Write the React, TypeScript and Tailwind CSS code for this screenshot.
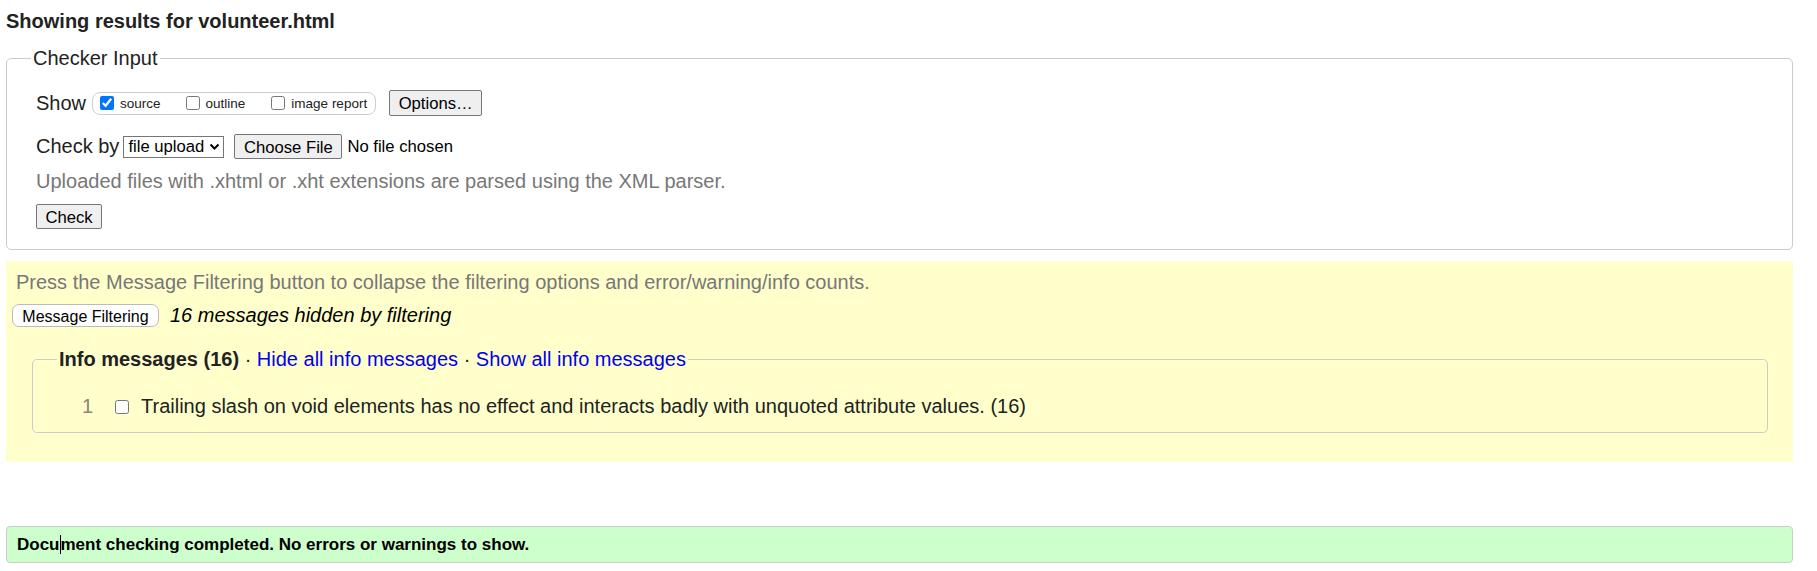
export default function App() {
  return (
    <div className="min-h-[571px] bg-white pl-[6px] pr-[24px] pt-[10px] font-['Liberation_Sans',Arial,sans-serif] text-[#222]">
      <h2 className="text-[20px] font-bold leading-[23px]">Showing results for volunteer.html</h2>

      {/* checker input */}
      <fieldset className="mt-[14px] rounded-[5px] border border-[#ccc] pb-[19px] pl-[24px]">
        <legend className="px-[2px] text-[20px] leading-[23px]">Checker Input</legend>

        <div className="mt-[20px] flex h-[26px] items-center pl-[5px]">
          <span className="text-[20px] leading-[23px]">Show</span>
          <div className="ml-[6px] flex h-[23px] items-center rounded-[8px] border border-[#ccc] pl-[7px] pr-[8px] text-[13.5px]">
            <label className="mr-[25px] flex items-center gap-[6px]">
              <input type="checkbox" defaultChecked className="h-[14px] w-[14px] accent-[#0075ff]" />
              <span className="pt-[3px]">source</span>
            </label>
            <label className="mr-[26px] flex items-center gap-[6px]">
              <input type="checkbox" className="h-[14px] w-[14px]" />
              <span className="pt-[3px]">outline</span>
            </label>
            <label className="flex items-center gap-[6px]">
              <input type="checkbox" className="h-[14px] w-[14px]" />
              <span className="pt-[3px]">image report</span>
            </label>
          </div>
          <button className="ml-[13px] h-[26px] w-[93px] rounded-[2px] border border-[#767676] bg-[#efefef] text-[16.67px] text-black">
            Options…
          </button>
        </div>

        <div className="mt-[18px] flex h-[25px] items-center pl-[5px]">
          <span className="text-[20px] leading-[23px]">Check by</span>
          <div className="ml-[4px] flex h-[22px] w-[101px] items-center justify-between border border-[#767676] bg-white pl-[4px] pr-[3px] text-[16.67px] text-black">
            file upload
            <svg width="11" height="8" viewBox="0 0 11 8">
              <path d="M1.5 1.5 L5.5 5.5 L9.5 1.5" fill="none" stroke="#000" strokeWidth="2" />
            </svg>
          </div>
          <button className="ml-[10px] h-[25px] w-[108px] rounded-[2px] border border-[#767676] bg-[#efefef] text-[16.67px] text-black">
            Choose File
          </button>
          <span className="ml-[5px] text-[16.67px] text-black">No file chosen</span>
        </div>

        <p className="mt-[11px] pl-[5px] text-[20px] leading-[23px] text-[#777]">
          Uploaded files with .xhtml or .xht extensions are parsed using the XML parser.
        </p>

        <div className="mt-[11px] pl-[5px]">
          <button className="h-[25px] w-[66px] rounded-[2px] border border-[#767676] bg-[#efefef] text-[16.67px] text-black">
            Check
          </button>
        </div>
      </fieldset>

      {/* message filtering */}
      <div className="mt-[11px] bg-[#ffffcc] pb-[29px] pt-[10px]">
        <p className="pl-[10px] text-[20px] leading-[23px] text-[#777]">
          Press the Message Filtering button to collapse the filtering options and error/warning/info counts.
        </p>
        <div className="mt-[10px] flex items-center pl-[6px]">
          <button className="h-[23px] w-[147px] rounded-[7px] border border-[#bbb] bg-white text-[16px] text-black">
            Message Filtering
          </button>
          <span className="ml-[11px] text-[20px] italic leading-[23px] text-black">16 messages hidden by filtering</span>
        </div>

        <fieldset className="ml-[26px] mr-[25px] mt-[21px] rounded-[5px] border border-[#ccc] pb-[14px] pl-[24px]">
          <legend className="px-[2px] text-[20px] leading-[23px]">
            <b>Info messages (16)</b> · <span className="text-[#0000ee]">Hide all info messages</span> ·{' '}
            <span className="text-[#0000ee]">Show all info messages</span>
          </legend>
          <div className="mt-[24px] flex items-center text-[20px] leading-[23px]">
            <span className="w-[58px] pr-[22px] text-right text-[#8a8574]">1</span>
            <input type="checkbox" className="h-[14px] w-[14px]" />
            <span className="ml-[12px]">
              Trailing slash on void elements has no effect and interacts badly with unquoted attribute values. (16)
            </span>
          </div>
        </fieldset>
      </div>

      {/* result */}
      <div className="mt-[64px] flex h-[37px] items-center rounded-[4px] border border-[#ccc] bg-[#ccffcc] pl-[10px] text-[17px] font-bold text-black">
        Docu
        <span className="inline-block h-[19px] w-px bg-black" />
        ment checking completed. No errors or warnings to show.
      </div>
    </div>
  );
}
